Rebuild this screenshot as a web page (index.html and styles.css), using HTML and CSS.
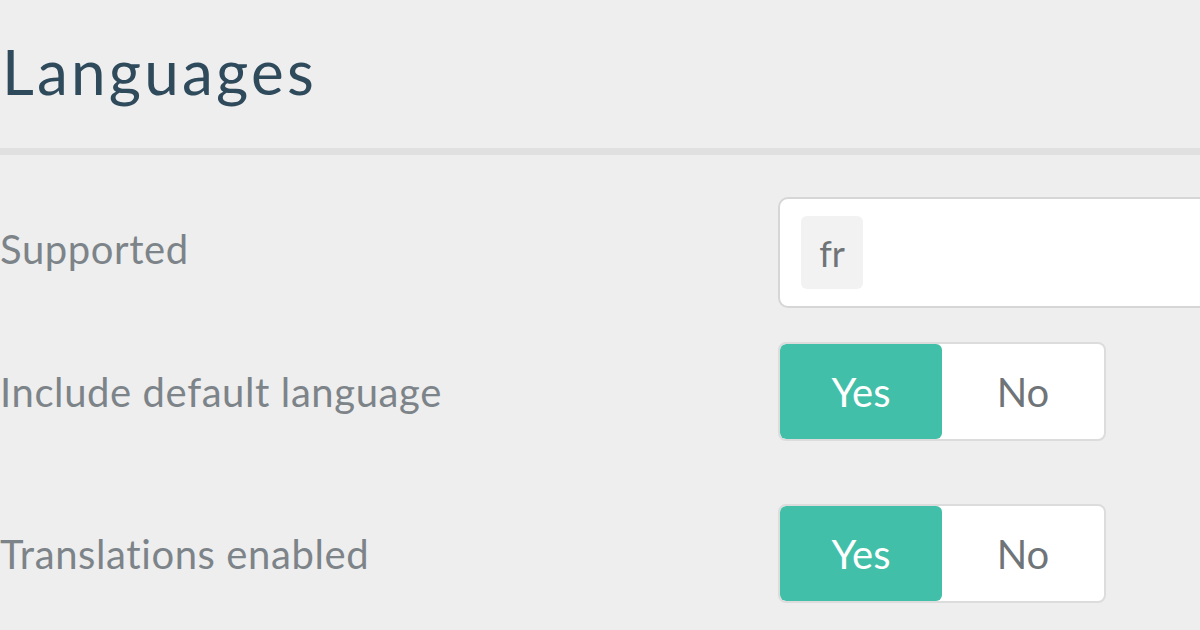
FILE: index.html
```html
<!DOCTYPE html>
<html lang="en">
<head>
  <meta charset="utf-8" />
  <title>Languages</title>
  <link rel="stylesheet" href="styles.css">
</head>
<body>
  <div class="page">
    <h1 class="title">Languages</h1>
    <div class="rule"></div>
    <div class="form">
      <div class="row row-supported">
        <label class="label label-top">Supported</label>
        <div class="tags">
          <span class="tag">fr</span>
        </div>
      </div>
      <div class="row row-toggle">
        <label class="label">Include default language</label>
        <div class="toggle">
          <span class="opt on">Yes</span>
          <span class="opt">No</span>
        </div>
      </div>
      <div class="row row-toggle row-last">
        <label class="label">Translations enabled</label>
        <div class="toggle">
          <span class="opt on">Yes</span>
          <span class="opt">No</span>
        </div>
      </div>
    </div>
  </div>
</body>
</html>
```

FILE: styles.css
```css
body { margin: 0; background: #eeeeee; font-family: 'Lato', 'Open Sans', sans-serif; overflow: hidden; }
.page { width: 1200px; height: 630px; overflow: hidden; }
.title { margin: 0; padding: 33px 0 0 2px; height: 112px; box-sizing: border-box; font-size: 62px; line-height: 76px; font-weight: 400; letter-spacing: 3.2px; color: #2e4a5b; font-family: 'Lato', sans-serif; }
.rule { height: 7px; background: #e0e0e0; margin-top: 36px; }
.form { display: flex; flex-direction: column; }
.row { display: grid; grid-template-columns: 778px 500px; align-items: center; }
.row-supported { margin-top: 42px; }
.row-toggle { margin-top: 34px; }
.row-last { margin-top: 63px; }
.label { font-size: 40px; color: #7d8489; letter-spacing: 0.6px; }
.label-top { margin-top: -8px; }
.tags { height: 111px; box-sizing: border-box; border: 2px solid #d6d6d6; border-radius: 10px; background: #fff; padding: 16px 21px; display: flex; align-items: center; }
.tag { background: #f2f2f2; border-radius: 6px; height: 73px; width: 62px; display: flex; align-items: center; justify-content: center; font-size: 36px; color: #6f7478; }
.toggle { display: flex; width: 328px; height: 99px; box-sizing: border-box; border: 2px solid #dcdcdc; border-radius: 8px; background: #fff; overflow: hidden; }
.opt { flex: 1; display: flex; align-items: center; justify-content: center; font-size: 40px; color: #6f7478; }
.opt.on { background: #41bfa8; color: #fff; border-radius: 6px; }
```
